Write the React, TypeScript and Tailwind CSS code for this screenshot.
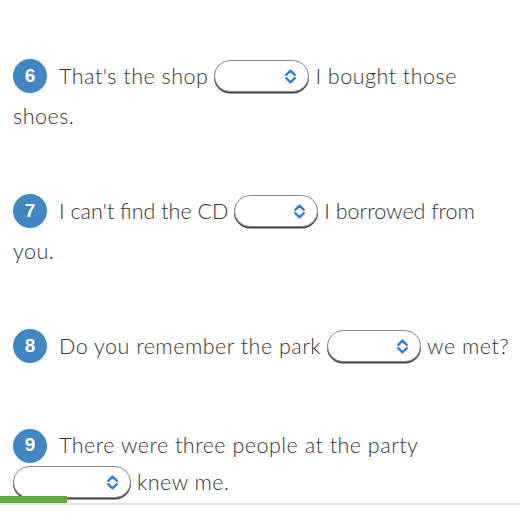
import React from "react";

function Badge({ n }: { n: number }) {
  return (
    <span className="inline-flex h-[34px] w-[34px] shrink-0 items-center justify-center rounded-full bg-[#3f86c2] text-[19px] font-bold tracking-normal text-white [font-family:'Liberation_Sans',sans-serif]">
      {n}
    </span>
  );
}

function Select({ w, first = false }: { w: number; first?: boolean }) {
  return (
    <span
      className={
        (first ? "mr-[6px] " : "mx-[6px] ") +
        "inline-flex h-[32px] shrink-0 items-center justify-end rounded-[16px] border border-[#8a8a8a] bg-white pr-[10px] shadow-[0_1.5px_0_0_#444]"
      }
      style={{ width: w }}
    >
      <svg width="15" height="17" viewBox="0 0 14 16" fill="none">
        <path d="M3 6.5 L7 2.5 L11 6.5" stroke="#2f7fd8" strokeWidth="2.2" strokeLinecap="round" strokeLinejoin="round" />
        <path d="M3 9.5 L7 13.5 L11 9.5" stroke="#2f7fd8" strokeWidth="2.2" strokeLinecap="round" strokeLinejoin="round" />
      </svg>
    </span>
  );
}

function Line({ children, h = 40 }: { children: React.ReactNode; h?: number }) {
  return (
    <div className="flex items-center whitespace-nowrap" style={{ height: h }}>
      {children}
    </div>
  );
}

export default function App() {
  return (
    <div className="relative h-[520px] w-[520px] overflow-hidden bg-white text-[21.5px] font-light tracking-[0.5px] text-[#333] [font-family:'Lato',sans-serif]">
      <div className="px-[13px] pt-[56px]">
        <Line>
          <Badge n={6} />
          <span className="ml-[12px]">That's the shop</span>
          <Select w={95} />
          <span>I bought those</span>
        </Line>
        <Line>
          <span>shoes.</span>
        </Line>

        <div className="mt-[55px]">
          <Line>
            <Badge n={7} />
            <span className="ml-[12px] tracking-normal">I can't find the CD</span>
            <Select w={84} />
            <span className="tracking-normal">I borrowed from</span>
          </Line>
          <Line>
            <span>you.</span>
          </Line>
        </div>

        <div className="mt-[55px]">
          <Line>
            <Badge n={8} />
            <span className="ml-[12px]">Do you remember the park</span>
            <Select w={94} />
            <span>we met?</span>
          </Line>
        </div>

        <div className="mt-[61px]">
          <Line h={37}>
            <Badge n={9} />
            <span className="ml-[12px]">There were three people at the party</span>
          </Line>
          <Line h={36}>
            <Select w={118} first />
            <span>knew me.</span>
          </Line>
        </div>
      </div>
      <div className="absolute left-0 right-0 top-[496px]">
        <div className="h-[7px] w-[67px] bg-[#5fa83e]" />
        <div className="h-[2px] w-full bg-[#e0e0e0]" />
      </div>
    </div>
  );
}
